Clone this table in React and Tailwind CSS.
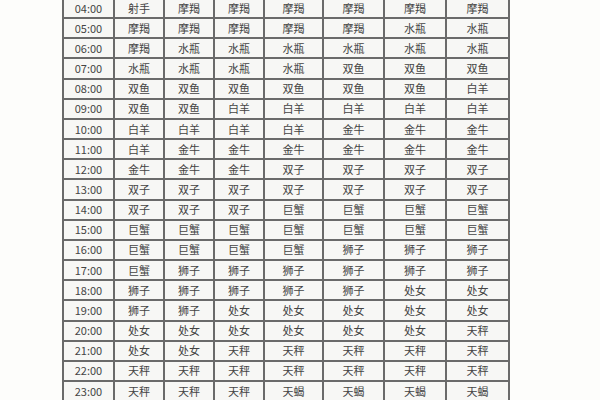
import React from 'react';

const rows = [
    ['04:00', '射手', '摩羯', '摩羯', '摩羯', '摩羯', '摩羯', '摩羯'],
    ['05:00', '摩羯', '摩羯', '摩羯', '摩羯', '摩羯', '水瓶', '水瓶'],
    ['06:00', '摩羯', '水瓶', '水瓶', '水瓶', '水瓶', '水瓶', '水瓶'],
    ['07:00', '水瓶', '水瓶', '水瓶', '水瓶', '双鱼', '双鱼', '双鱼'],
    ['08:00', '双鱼', '双鱼', '双鱼', '双鱼', '双鱼', '双鱼', '白羊'],
    ['09:00', '双鱼', '双鱼', '白羊', '白羊', '白羊', '白羊', '白羊'],
    ['10:00', '白羊', '白羊', '白羊', '白羊', '金牛', '金牛', '金牛'],
    ['11:00', '白羊', '金牛', '金牛', '金牛', '金牛', '金牛', '金牛'],
    ['12:00', '金牛', '金牛', '金牛', '双子', '双子', '双子', '双子'],
    ['13:00', '双子', '双子', '双子', '双子', '双子', '双子', '双子'],
    ['14:00', '双子', '双子', '双子', '巨蟹', '巨蟹', '巨蟹', '巨蟹'],
    ['15:00', '巨蟹', '巨蟹', '巨蟹', '巨蟹', '巨蟹', '巨蟹', '巨蟹'],
    ['16:00', '巨蟹', '巨蟹', '巨蟹', '巨蟹', '狮子', '狮子', '狮子'],
    ['17:00', '巨蟹', '狮子', '狮子', '狮子', '狮子', '狮子', '狮子'],
    ['18:00', '狮子', '狮子', '狮子', '狮子', '狮子', '处女', '处女'],
    ['19:00', '狮子', '狮子', '处女', '处女', '处女', '处女', '处女'],
    ['20:00', '处女', '处女', '处女', '处女', '处女', '处女', '天秤'],
    ['21:00', '处女', '处女', '天秤', '天秤', '天秤', '天秤', '天秤'],
    ['22:00', '天秤', '天秤', '天秤', '天秤', '天秤', '天秤', '天秤'],
    ['23:00', '天秤', '天秤', '天秤', '天蝎', '天蝎', '天蝎', '天蝎'],
];

const widths = ['w-[51px]', 'w-[50px]', 'w-[50px]', 'w-[50px]', 'w-[59px]', 'w-[61px]', 'w-[62px]', 'w-[63px]'];

export default function App() {
    return (
        <div className="w-[600px] h-[400px] overflow-hidden bg-[#fdfdfb] pl-[62px]" style={{ fontFamily: '"Noto Sans CJK SC", "Noto Sans", sans-serif' }}>
            <table className="-mt-[3px] border-collapse table-fixed bg-[#f7f7f5] text-[11px] text-[#444]">
                <tbody>
                    {rows.map((row, i) => (
                        <tr key={i} className="h-[20.17px]">
                            {row.map((cell, j) => (
                                <td key={j} className={`${widths[j]} border-2 border-[#6a6a6a] text-center leading-none p-0`}>
                                    {cell}
                                </td>
                            ))}
                        </tr>
                    ))}
                </tbody>
            </table>
        </div>
    );
}
